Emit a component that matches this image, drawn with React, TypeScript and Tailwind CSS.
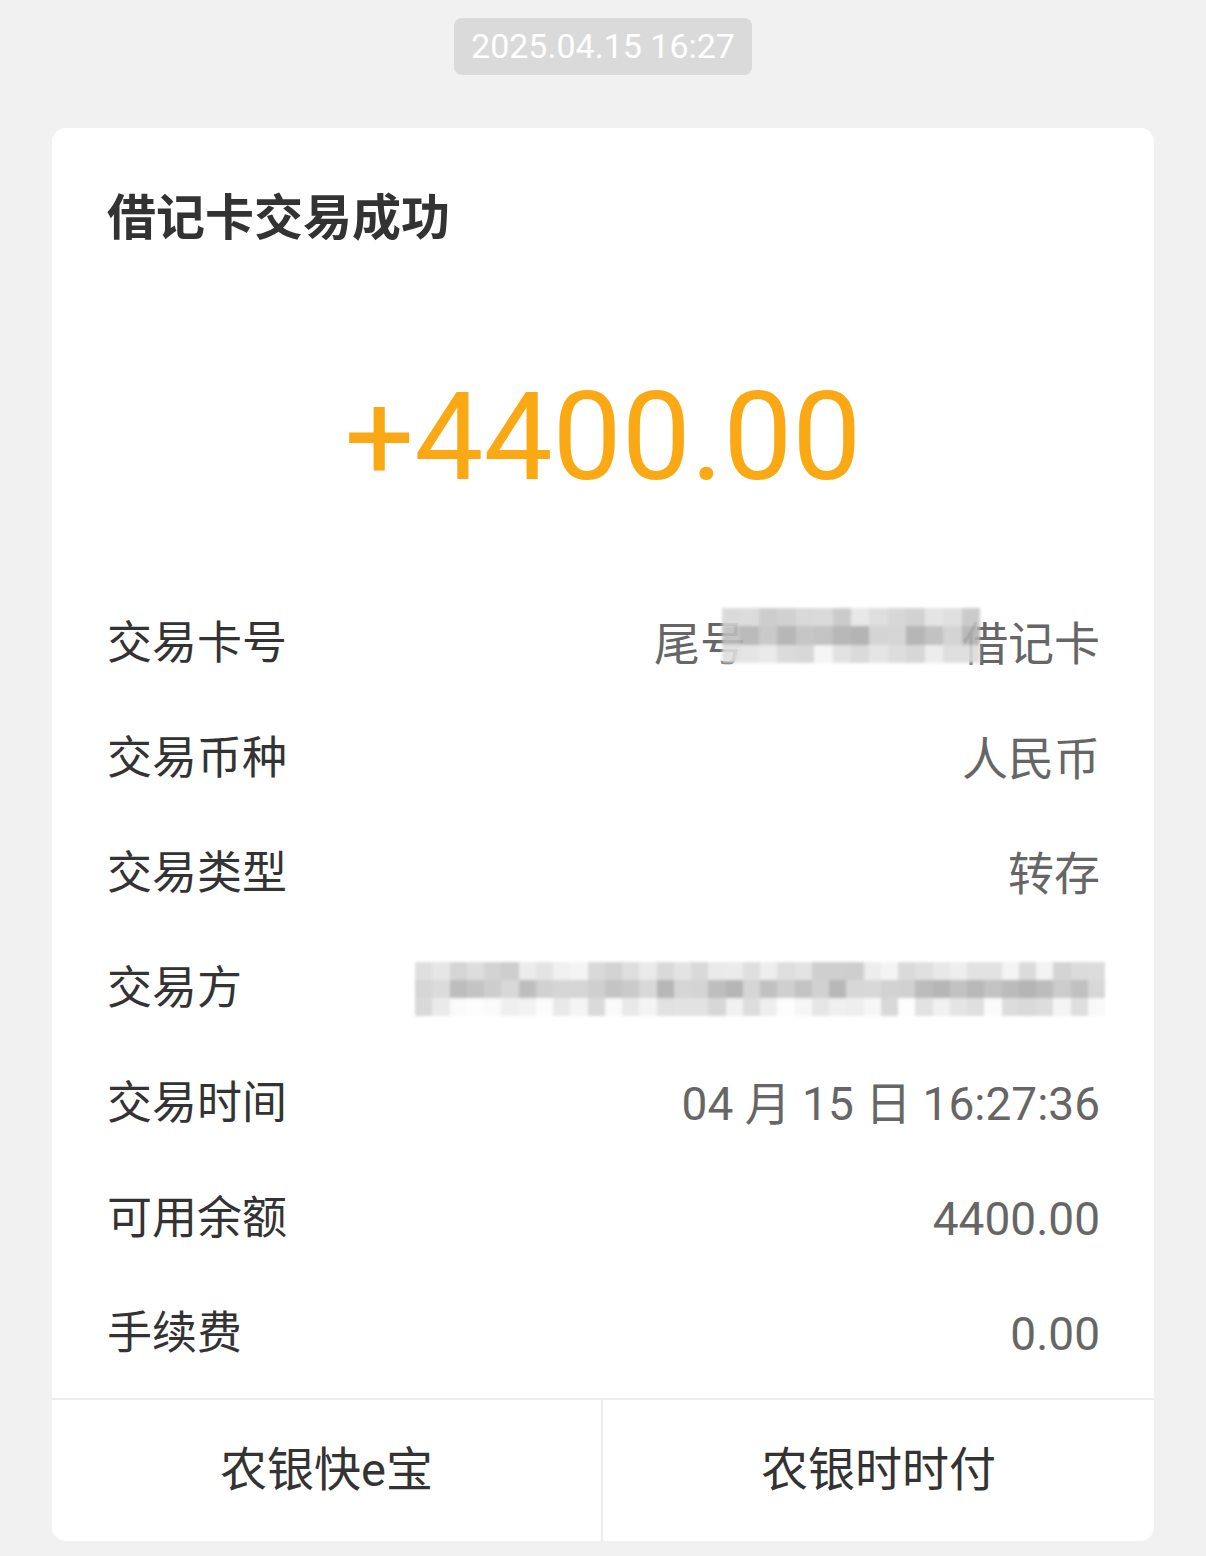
const FONT = "font-['Roboto','Noto_Sans_CJK_SC',sans-serif]";

function Mosaic({
  cols,
  rows,
  seed,
  dark,
  className,
}: {
  cols: number;
  rows: number;
  seed: number;
  dark: number;
  className?: string;
}) {
  let s = seed;
  const rnd = () => {
    s = (s * 9301 + 49297) % 233280;
    return s / 233280;
  };
  const cells = [];
  for (let r = 0; r < rows; r++) {
    for (let c = 0; c < cols; c++) {
      const base = (r === 1 ? 180 : r === 0 ? 205 : 215) - dark;
      const v = Math.round(base + rnd() * 40);
      cells.push(<div key={r + "-" + c} style={{ backgroundColor: `rgb(${v},${v},${v})` }} />);
    }
  }
  return (
    <div
      className={"grid blur-[1.5px] " + (className ?? "")}
      style={{ gridTemplateColumns: `repeat(${cols}, 1fr)`, gridTemplateRows: `repeat(${rows}, 1fr)` }}
    >
      {cells}
    </div>
  );
}

function Row({ label, children }: { label: string; children: React.ReactNode }) {
  return (
    <div className="flex h-[115px] items-center justify-between pl-[55px] pr-[54px]">
      <span className="text-[45px] leading-none text-[#333]">{label}</span>
      {children}
    </div>
  );
}

export default function App() {
  return (
    <div className={`min-h-[1556px] bg-[#f1f1f1] pt-[18px] pb-[16px] ${FONT}`}>
      <div className="flex justify-center">
        <div className="flex h-[57px] w-[298px] items-center justify-center rounded-[8px] bg-[#dadada] text-[34px] text-white">
          2025.04.15 16:27
        </div>
      </div>

      <div className="mx-[52px] mt-[53px] overflow-hidden rounded-[14px] bg-white">
        <div className="pl-[55px] pt-[63px]">
          <h1 className="text-[49px] font-bold leading-[55px] text-[#333]">借记卡交易成功</h1>
        </div>

        <div className="mt-[130px] text-center text-[123px] leading-none text-[#faa814]">+4400.00</div>

        <div className="mt-[87px] pb-[7px]">
          <Row label="交易卡号">
            <div className="relative text-[46px] leading-none text-[#666]">
              <span>尾号</span>
              <span className="inline-block w-[216px]" />
              <span>借记卡</span>
              <Mosaic
                cols={14}
                rows={3}
                seed={7}
                dark={10}
                className="absolute left-[68px] top-[-13px] h-[56px] w-[258px] opacity-90"
              />
            </div>
          </Row>
          <Row label="交易币种">
            <span className="text-[46px] leading-none text-[#666]">人民币</span>
          </Row>
          <Row label="交易类型">
            <span className="text-[46px] leading-none text-[#666]">转存</span>
          </Row>
          <Row label="交易方">
            <Mosaic cols={40} rows={3} seed={31} dark={0} className="mr-[-5px] h-[54px] w-[690px]" />
          </Row>
          <Row label="交易时间">
            <span className="text-[46px] leading-none text-[#666]">04 月 15 日 16:27:36</span>
          </Row>
          <Row label="可用余额">
            <span className="text-[46px] leading-none text-[#666]">4400.00</span>
          </Row>
          <Row label="手续费">
            <span className="text-[46px] leading-none text-[#666]">0.00</span>
          </Row>
        </div>

        <div className="grid h-[143px] grid-cols-2 border-t-[2px] border-[#ececec]">
          <button className="flex items-center justify-center border-r-[2px] border-[#ececec] text-[47px] text-[#333]">
            农银快e宝
          </button>
          <button className="flex items-center justify-center text-[47px] text-[#333]">农银时时付</button>
        </div>
      </div>
    </div>
  );
}
